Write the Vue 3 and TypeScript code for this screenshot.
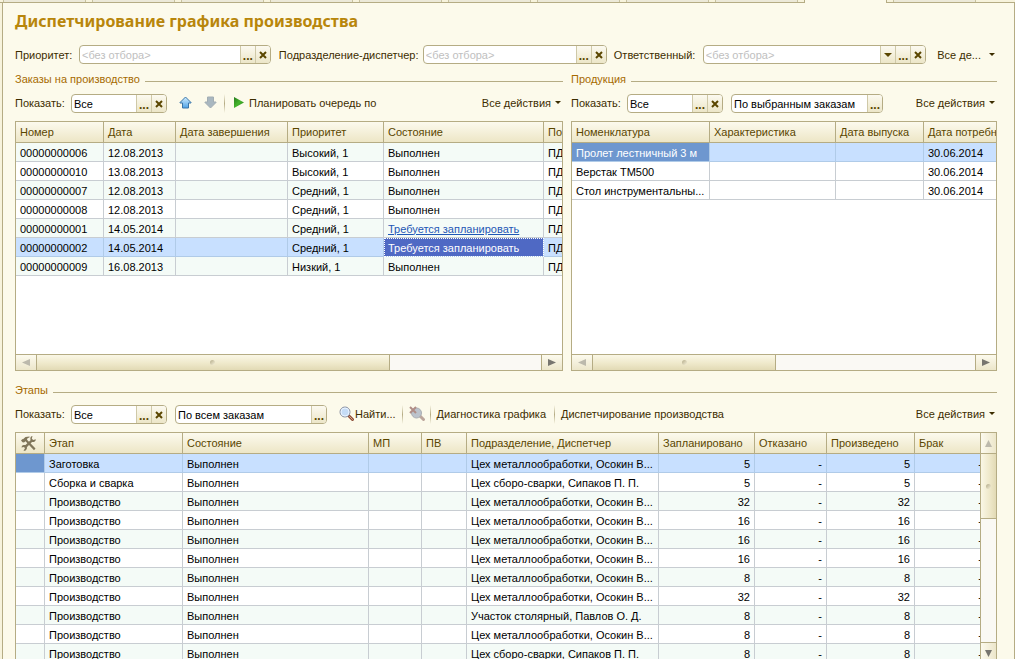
<script setup lang="ts">
interface Order { num: string; date: string; priority: string; state: string; link?: boolean; selected?: boolean }
interface Stage { name: string; dept: string; planned: number; done: number }

const tabs: number[] = Array.from({ length: 11 }, (_, i) => i)
const activeTab = 9

const filters = [
  { id: 'priority', label: 'Приоритет:', drop: false },
  { id: 'dept', label: 'Подразделение-диспетчер:', drop: false },
  { id: 'owner', label: 'Ответственный:', drop: true },
]

const orders: Order[] = [
  { num: '00000000006', date: '12.08.2013', priority: 'Высокий, 1', state: 'Выполнен' },
  { num: '00000000010', date: '13.08.2013', priority: 'Высокий, 1', state: 'Выполнен' },
  { num: '00000000007', date: '12.08.2013', priority: 'Средний, 1', state: 'Выполнен' },
  { num: '00000000008', date: '12.08.2013', priority: 'Средний, 1', state: 'Выполнен' },
  { num: '00000000001', date: '14.05.2014', priority: 'Средний, 1', state: 'Требуется запланировать', link: true },
  { num: '00000000002', date: '14.05.2014', priority: 'Средний, 1', state: 'Требуется запланировать', link: true, selected: true },
  { num: '00000000009', date: '16.08.2013', priority: 'Низкий, 1', state: 'Выполнен' },
]

const products: string[] = ['Пролет лестничный 3 м', 'Верстак ТМ500', 'Стол инструментальны...']

const metal = 'Цех металлообработки, Осокин В...'
const weld = 'Цех сборо-сварки, Сипаков П. П.'
const wood = 'Участок столярный, Павлов О. Д.'
const stages: Stage[] = [
  { name: 'Заготовка', dept: metal, planned: 5, done: 5 },
  { name: 'Сборка и сварка', dept: weld, planned: 5, done: 5 },
  { name: 'Производство', dept: metal, planned: 32, done: 32 },
  { name: 'Производство', dept: metal, planned: 16, done: 16 },
  { name: 'Производство', dept: metal, planned: 16, done: 16 },
  { name: 'Производство', dept: metal, planned: 16, done: 16 },
  { name: 'Производство', dept: metal, planned: 8, done: 8 },
  { name: 'Производство', dept: metal, planned: 32, done: 32 },
  { name: 'Производство', dept: wood, planned: 8, done: 8 },
  { name: 'Производство', dept: metal, planned: 8, done: 8 },
  { name: 'Производство', dept: weld, planned: 8, done: 8 },
]
</script>

<template>
  <div class="page">
    <div class="tabs">
      <span v-for="t in tabs" :key="t" class="tab" :class="{ active: t === activeTab }"></span>
    </div>
    <main class="panel">
      <h1>Диспетчирование графика производства</h1>

      <div class="filters">
        <template v-for="f in filters" :key="f.id">
          <label :for="f.id" :class="'label-' + f.id">{{ f.label }}</label>
          <div class="field" :class="'field-' + f.id">
            <input :id="f.id" type="text" placeholder="&lt;без отбора&gt;" />
            <button v-if="f.drop" type="button" aria-label="Список"><svg width="8" height="4" viewBox="0 0 8 4"><path d="M0 0h8L4 4z" fill="#5a4600" /></svg></button>
            <button type="button" class="dots" aria-label="Выбрать">...</button>
            <button type="button" aria-label="Очистить"><svg width="8" height="8" viewBox="0 0 8 8"><path d="M1 1l6 6M7 1l-6 6" stroke="#5a4600" stroke-width="2" /></svg></button>
          </div>
        </template>
        <button type="button" class="cmd menu wide"><span>Все де...</span><svg width="6" height="3" viewBox="0 0 6 3"><path d="M0 0h6L3 3z" fill="#3c2d00" /></svg></button>
      </div>

      <div class="columns">
        <section>
          <h2>Заказы на производство</h2>
          <div class="toolbar">
            <label for="orders-show" class="show">Показать:</label>
            <div class="field short">
              <input id="orders-show" type="text" value="Все" />
              <button type="button" class="dots" aria-label="Выбрать">...</button>
              <button type="button" aria-label="Очистить"><svg width="8" height="8" viewBox="0 0 8 8"><path d="M1 1l6 6M7 1l-6 6" stroke="#5a4600" stroke-width="2" /></svg></button>
            </div>
            <button type="button" class="cmd up" aria-label="Вверх">
              <svg width="13" height="13" viewBox="0 0 13 13">
                <defs><linearGradient id="blue" x1="0" y1="0" x2="0" y2="1"><stop offset="0" stop-color="#d4efff" /><stop offset="1" stop-color="#4ea2e6" /></linearGradient></defs>
                <path d="M6.500 1L12 6.500V7H9.500v5h-6V7H1v-.5z" fill="url(#blue)" stroke="#3a75a8" stroke-linejoin="round" />
              </svg>
            </button>
            <button type="button" class="cmd down" aria-label="Вниз">
              <svg width="13" height="13" viewBox="0 0 13 13"><path d="M3.500 1h6v5H12v.5L6.500 12 1 6.500V6h2.500z" fill="#a9b7c0" stroke="#a2adb3" stroke-linejoin="round" /></svg>
            </button>
            <i class="sep first"></i>
            <button type="button" class="cmd plan">
              <svg width="10" height="11" viewBox="0 0 10 11">
                <defs><linearGradient id="green" x1="0" y1="0" x2="1" y2="1"><stop offset="0" stop-color="#267a1e" /><stop offset=".5" stop-color="#45b52c" /><stop offset="1" stop-color="#267a1e" /></linearGradient></defs>
                <path d="M0 0l10 5.500L0 11z" fill="url(#green)" />
              </svg>
              <span>Планировать очередь по</span>
            </button>
            <button type="button" class="cmd menu"><span>Все действия</span><svg width="6" height="3" viewBox="0 0 6 3"><path d="M0 0h6L3 3z" fill="#3c2d00" /></svg></button>
          </div>
          <div class="frame tall">
            <div class="view">
              <table class="orders">
                <colgroup><col class="w88" /><col class="w72" /><col class="w112" /><col class="w96" /><col class="w160" /><col /></colgroup>
                <thead><tr><th>Номер</th><th>Дата</th><th>Дата завершения</th><th>Приоритет</th><th>Состояние</th><th class="cut">По</th></tr></thead>
                <tbody>
                  <tr v-for="(o, i) in orders" :key="o.num" :class="{ tint: i % 2 === 0, selected: o.selected }">
                    <td>{{ o.num }}</td><td>{{ o.date }}</td><td></td><td>{{ o.priority }}</td>
                    <td :class="{ focus: o.selected }"><a v-if="o.link" href="#">{{ o.state }}</a><template v-else>{{ o.state }}</template></td>
                    <td class="cut">ПД</td>
                  </tr>
                </tbody>
              </table>
            </div>
            <div class="hbar">
              <button type="button" aria-label="Влево"><svg width="8" height="7" viewBox="0 0 8 7"><path d="M8 0v7L0 3.500z" fill="#bcb9ac" /></svg></button>
              <div class="track"><div class="thumb t70"><i class="grip"></i></div></div>
              <button type="button" class="end" aria-label="Вправо"><svg width="8" height="7" viewBox="0 0 8 7"><path d="M0 0v7l8-3.500z" fill="#77756f" /></svg></button>
            </div>
          </div>
        </section>

        <section>
          <h2>Продукция</h2>
          <div class="toolbar">
            <label for="products-show" class="show">Показать:</label>
            <div class="field short">
              <input id="products-show" type="text" value="Все" />
              <button type="button" class="dots" aria-label="Выбрать">...</button>
              <button type="button" aria-label="Очистить"><svg width="8" height="8" viewBox="0 0 8 8"><path d="M1 1l6 6M7 1l-6 6" stroke="#5a4600" stroke-width="2" /></svg></button>
            </div>
            <div class="field scope">
              <input type="text" value="По выбранным заказам" aria-label="Отбор продукции" />
              <button type="button" class="dots" aria-label="Выбрать">...</button>
            </div>
            <button type="button" class="cmd menu"><span>Все действия</span><svg width="6" height="3" viewBox="0 0 6 3"><path d="M0 0h6L3 3z" fill="#3c2d00" /></svg></button>
          </div>
          <div class="frame tall">
            <div class="view">
              <table class="products">
                <colgroup><col class="w138" /><col class="w126" /><col class="w88" /><col /></colgroup>
                <thead><tr><th>Номенклатура</th><th>Характеристика</th><th>Дата выпуска</th><th class="cut">Дата потребн</th></tr></thead>
                <tbody>
                  <tr v-for="(p, i) in products" :key="p" :class="{ selected: i === 0 }">
                    <td :class="{ current: i === 0 }">{{ p }}</td><td></td><td></td><td class="cut">30.06.2014</td>
                  </tr>
                </tbody>
              </table>
            </div>
            <div class="hbar">
              <button type="button" aria-label="Влево"><svg width="8" height="7" viewBox="0 0 8 7"><path d="M8 0v7L0 3.500z" fill="#bcb9ac" /></svg></button>
              <div class="track"><div class="thumb t48"><i class="grip"></i></div></div>
              <button type="button" class="end" aria-label="Вправо"><svg width="8" height="7" viewBox="0 0 8 7"><path d="M0 0v7l8-3.500z" fill="#77756f" /></svg></button>
            </div>
          </div>
        </section>
      </div>

      <section class="stages-section">
        <h2>Этапы</h2>
        <div class="toolbar">
          <label for="stages-show" class="show">Показать:</label>
          <div class="field short">
            <input id="stages-show" type="text" value="Все" />
            <button type="button" class="dots" aria-label="Выбрать">...</button>
            <button type="button" aria-label="Очистить"><svg width="8" height="8" viewBox="0 0 8 8"><path d="M1 1l6 6M7 1l-6 6" stroke="#5a4600" stroke-width="2" /></svg></button>
          </div>
          <div class="field scope">
            <input type="text" value="По всем заказам" aria-label="Отбор этапов" />
            <button type="button" class="dots" aria-label="Выбрать">...</button>
          </div>
          <button type="button" class="cmd find">
            <svg width="15" height="15" viewBox="0 0 15 15">
              <path d="M9.500 9.500l4 4" stroke="#8e4f3a" stroke-width="3" stroke-linecap="round" />
              <path d="M10.500 10.500l3 3" stroke="#d9a184" stroke-width="1" stroke-linecap="round" />
              <circle cx="6" cy="6" r="5" fill="#c5dcf6" stroke="#8b91a0" />
              <circle cx="6" cy="6" r="4" fill="none" stroke="#e9f3ff" />
            </svg>
            <span>Найти...</span>
          </button>
          <i class="sep"></i>
          <button type="button" class="cmd reset" aria-label="Отменить поиск">
            <svg width="16" height="15" viewBox="0 0 16 15">
              <path d="M11 10l3.500 3.500" stroke="#bca69c" stroke-width="3" stroke-linecap="round" />
              <circle cx="7.500" cy="7" r="5" fill="#bcc3cc" stroke="#aaaeb3" />
              <path d="M1 1l6 6M7 1L1 7" stroke="#b08d86" stroke-width="2" />
            </svg>
          </button>
          <i class="sep"></i>
          <button type="button" class="cmd text">Диагностика графика</button>
          <i class="sep"></i>
          <button type="button" class="cmd text">Диспетчирование производства</button>
          <button type="button" class="cmd menu"><span>Все действия</span><svg width="6" height="3" viewBox="0 0 6 3"><path d="M0 0h6L3 3z" fill="#3c2d00" /></svg></button>
        </div>
        <div class="frame split">
          <div class="view">
            <table class="stages">
              <colgroup><col class="w29" /><col class="w138" /><col /><col class="w53" /><col class="w45" /><col class="w192" /><col class="w96" /><col class="w72" /><col class="w88" /><col class="w72" /></colgroup>
              <thead>
                <tr>
                  <th class="tools">
                    <svg width="15" height="15" viewBox="0 0 15 15" fill="#80765a">
                      <path d="M0 4.500L1.500 3 2 3.200 4.500 1 8.500 .6 8.700 1.200 6.500 2.200 6 3.800 14.500 12.500 13 14.200 4.500 5.300 3 6.500 1.500 6.200z" />
                      <path d="M11.500 0L10.800 2.800 12.300 4 14.800 3.300 14.500 4.800 13 6H11L6 11 5.800 13 4.300 14.800H2.500L4 12.300 3 11 .5 11.500 1 9.800 2.500 9H4.500L9.500 4.200 9.300 2 10 .6z" />
                    </svg>
                  </th>
                  <th>Этап</th><th>Состояние</th><th>МП</th><th>ПВ</th><th>Подразделение, Диспетчер</th><th>Запланировано</th><th>Отказано</th><th>Произведено</th><th>Брак</th>
                </tr>
              </thead>
              <tbody>
                <tr v-for="(s, i) in stages" :key="i" :class="{ tint: i % 2 === 0, selected: i === 0 }">
                  <td :class="{ current: i === 0 }"></td><td>{{ s.name }}</td><td>Выполнен</td><td></td><td></td><td>{{ s.dept }}</td>
                  <td class="n">{{ s.planned }}</td><td class="n">-</td><td class="n">{{ s.done }}</td><td class="n">-</td>
                </tr>
              </tbody>
            </table>
          </div>
          <div class="vbar">
            <button type="button" aria-label="Вверх"><svg width="7" height="7" viewBox="0 0 7 7"><path d="M0 7h7L3.500 0z" fill="#bcb9ac" /></svg></button>
            <div class="vtrack"><div class="vthumb"><i class="grip"></i></div></div>
            <button type="button" class="end" aria-label="Вниз"><svg width="7" height="7" viewBox="0 0 7 7"><path d="M0 0h7L3.500 7z" fill="#77756f" /></svg></button>
          </div>
        </div>
      </section>
    </main>
  </div>
</template>

<style>
body { margin: 0; background: #fcfaeb; }
</style>

<style scoped>
* { box-sizing: border-box; }
.page { height: 100vh; overflow: hidden; display: flex; flex-direction: column; background: #f7f3dc; font: 11px/14px "Liberation Sans", Arial, sans-serif; color: #3c2d00; }
.tabs { flex: none; display: flex; gap: 6px; height: 3px; padding-left: 3px; border-bottom: 1px solid #b5ac84; overflow: visible; }
.tab { flex: none; width: 83px; height: 2px; background: #ece9d8; border: solid #c8c2a0; border-width: 0 1px; }
.tab.active { height: 3px; background: #fcfaeb; border-color: #b5ac84; }
.panel { flex: 1 0 auto; margin-left: 2px; padding: 8px 17px 0 12px; background: #fcfaeb; border: solid #b5ac84; border-width: 0 1px; }
h1 { margin: 0; font: bold 16px/20px "Noto Sans", Tahoma, sans-serif; color: #b8860b; white-space: nowrap; }
label, .cmd { white-space: nowrap; flex: none; }
input, button { font: inherit; color: inherit; margin: 0; padding: 0; border: 0; background: none; outline: 0; }
button { display: flex; align-items: center; justify-content: center; }
svg { display: block; flex: none; }

.filters { display: flex; align-items: center; margin-top: 14px; height: 19px; }
.label-priority { width: 64px; }
.label-dept { width: 152px; padding-left: 8px; }
.label-owner { width: 96px; padding-left: 7px; }
.field { display: flex; height: 19px; min-width: 0; background: #fff; border: 1px solid #b5ac84; border-radius: 4px; overflow: hidden; }
.field-priority { flex: 192 1 0; }
.field-dept { flex: 184 1 0; }
.field-owner { flex: 224 1 0; }
.field input { flex: 1; min-width: 0; width: 0; padding: 0 2px; color: #000; }
.field input::placeholder { color: #c0c0c0; opacity: 1; }
.field button { flex: none; width: 15px; border-left: 1px solid #cfc9a8; background: linear-gradient(#fcfaf0, #ece6c8); }
.field .dots { font-weight: bold; font-size: 12px; color: #5a4600; padding-top: 2px; }
.field.short { flex: none; width: 96px; }
.field.scope { flex: none; width: 152px; margin-left: 8px; }

.columns { display: grid; grid-template-columns: 548fr 426fr; gap: 8px; }
.columns > section { min-width: 0; }
h2 { display: flex; align-items: center; gap: 5px; margin: 8px 0 0; font: 11px/14px "Liberation Sans", Arial, sans-serif; color: #a66a00; white-space: nowrap; }
h2::after { content: ""; flex: 1; height: 1px; margin-top: 4px; background: #b5ac84; }
.toolbar { display: flex; align-items: center; height: 19px; margin: 8px 0; }
.toolbar label, .toolbar .cmd { padding-bottom: 2px; }
.show { width: 56px; }
.menu { gap: 4px; margin-left: auto; padding-right: 2px; }
.menu.wide { gap: 8px; margin-left: 11px; }
.up { margin-left: 12px; }
.down { margin-left: 12px; }
.sep { flex: none; width: 1px; height: 19px; background: linear-gradient(transparent, #b5ac84, transparent); }
.sep.first { margin-left: 7px; }
.plan { gap: 5px; margin-left: 9px; }
.find { gap: 1px; margin: 0 6px 0 12px; }
.reset { margin: 0 5px 0 6px; }
.text { margin: 0 8px 0 6px; }

.frame { display: flex; flex-direction: column; background: #fff; border: 1px solid #b5ac84; }
.tall { height: 250px; }
.view { flex: 1; min-width: 0; min-height: 0; overflow: hidden; }
table { table-layout: fixed; border-collapse: separate; border-spacing: 0; }
.orders { width: 100%; }
.products { width: 100%; }
.stages { width: calc(100% + 7px); }
th, td { padding: 1px 4px 0; text-align: left; font-weight: normal; white-space: nowrap; overflow: hidden; }
th { height: 21px; padding-top: 0; padding-bottom: 1px; color: #5a4600; background: linear-gradient(#fcfaee, #ede6c6); border-right: 1px solid #b5ac84; border-bottom: 1px solid #b5ac84; }
td { height: 19px; color: #000; border-right: 1px solid #c8cdd2; border-bottom: 1px solid #c8cdd2; }
.cut { padding-right: 0; border-right: 0; }
.tint td { background: #f4fbf7; }
.selected td { background: #c8e0ff; border-color: #b0cbe8; }
.selected .current { background: #6e97cf; color: #fff; }
td a { color: #1f57b5; text-decoration: underline; }
.selected .focus { background: #4f69c4; outline: 1px dotted #fff; outline-offset: -1px; }
.focus a { color: #fff; text-decoration: none; }
.n { text-align: right; }
.tools { padding: 0 5px; }
.w29 { width: 29px; } .w45 { width: 45px; } .w53 { width: 53px; } .w72 { width: 72px; } .w88 { width: 88px; } .w96 { width: 96px; }
.w112 { width: 112px; } .w126 { width: 126px; } .w138 { width: 138px; } .w160 { width: 160px; } .w192 { width: 192px; }

.hbar { flex: none; display: flex; height: 16px; border-top: 1px solid #b5ac84; }
.hbar button { flex: none; width: 21px; background: linear-gradient(#fcfaee, #ece6ca); border-right: 1px solid #b5ac84; }
.hbar .end { border-right: 0; border-left: 1px solid #b5ac84; }
.track { flex: 1; background: #faf9f4; }
.thumb { height: 100%; display: flex; align-items: center; justify-content: center; background: linear-gradient(#faf7e6, #efe9cb 55%, #e2dab5); border-right: 1px solid #b5ac84; }
.t70 { width: 70%; }
.t48 { width: 48%; }
.grip { width: 5px; height: 5px; border-radius: 3px; background: linear-gradient(135deg, #b3ab8a, #f7f2da); }

.stages-section { margin-top: 12px; }
.split { flex-direction: row; }
.vbar { flex: none; display: flex; flex-direction: column; width: 16px; border-left: 1px solid #b5ac84; }
.vbar button { flex: none; height: 21px; background: linear-gradient(90deg, #fcfaee, #ece6ca); border-bottom: 1px solid #b5ac84; }
.vbar .end { border-bottom: 0; border-top: 1px solid #b5ac84; }
.vtrack { flex: 1; background: #faf9f4; }
.vthumb { height: 65px; display: flex; align-items: center; justify-content: center; background: linear-gradient(90deg, #faf7e6, #efe9cb 55%, #e2dab5); border-bottom: 1px solid #b5ac84; }
</style>
